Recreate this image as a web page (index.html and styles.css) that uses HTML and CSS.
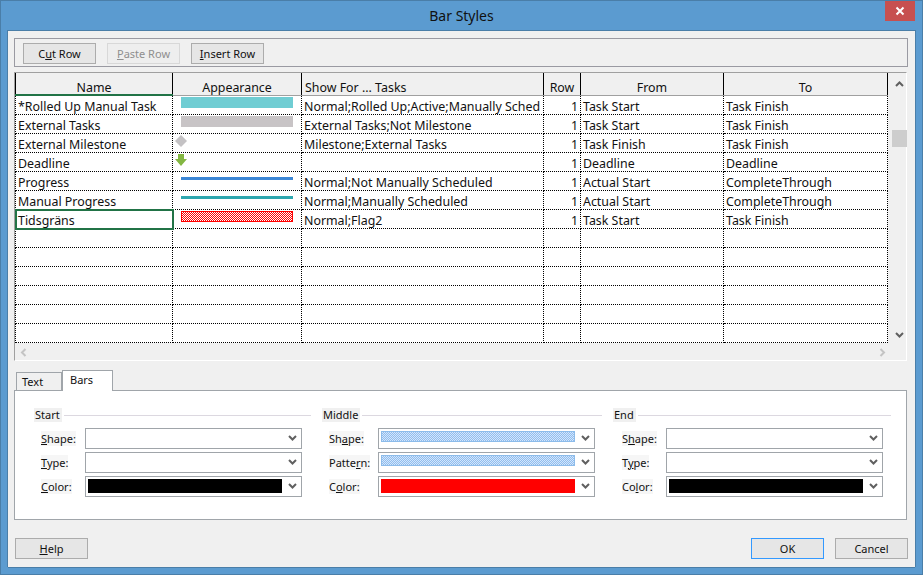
FILE: index.html
```html
<!DOCTYPE html>
<html lang="en">
<head>
<meta charset="UTF-8" />
<title>Bar Styles</title>
<link rel="stylesheet" href="styles.css">
</head>
<body>
<svg class="defs" width="0" height="0">
  <symbol id="chev" viewBox="0 0 9 6"><path d="M1 1l3.5 3.5L8 1" fill="none" stroke="currentColor" stroke-width="2"/></symbol>
</svg>

<div class="window">
  <div class="titlebar">Bar Styles
    <div class="close"><svg width="10" height="10" viewBox="0 0 10 10"><path d="M1.5 1.500l7 7M8.500 1.500l-7 7" stroke="#fff" stroke-width="2"/></svg></div>
  </div>

  <div class="dialog">
    <div class="toolbar">
      <button class="btn">C<u>u</u>t Row</button>
      <button class="btn disabled"><u>P</u>aste Row</button>
      <button class="btn"><u>I</u>nsert Row</button>
    </div>

    <div class="gridwrap">
      <div class="gridmain">
        <table class="grid">
          <colgroup>
            <col class="c1"><col class="c2"><col class="c3"><col class="c4"><col class="c5"><col class="c6">
          </colgroup>
          <thead>
            <tr><th class="active">Name</th><th>Appearance</th><th class="left">Show For ... Tasks</th><th>Row</th><th>From</th><th>To</th></tr>
          </thead>
          <tbody>
            <tr><td>*Rolled Up Manual Task</td><td class="app"><div class="bar teal"></div></td><td>Normal;Rolled Up;Active;Manually Sched</td><td class="num">1</td><td>Task Start</td><td>Task Finish</td></tr>
            <tr><td>External Tasks</td><td class="app"><div class="bar grey"></div></td><td>External Tasks;Not Milestone</td><td class="num">1</td><td>Task Start</td><td>Task Finish</td></tr>
            <tr><td>External Milestone</td><td class="app"><svg class="mark" width="12" height="12" viewBox="0 0 12 12"><path d="M6 0l6 6-6 6-6-6z" fill="#c4c2c4"/></svg></td><td>Milestone;External Tasks</td><td class="num">1</td><td>Task Finish</td><td>Task Finish</td></tr>
            <tr><td>Deadline</td><td class="app"><svg class="mark" width="12" height="12" viewBox="0 0 12 12"><path d="M3 0h6v5h3l-6 7-6-7h3z" fill="#84b743"/></svg></td><td></td><td class="num">1</td><td>Deadline</td><td>Deadline</td></tr>
            <tr><td>Progress</td><td class="app"><div class="line blue"></div></td><td>Normal;Not Manually Scheduled</td><td class="num">1</td><td>Actual Start</td><td>CompleteThrough</td></tr>
            <tr><td>Manual Progress</td><td class="app"><div class="line cyan"></div></td><td>Normal;Manually Scheduled</td><td class="num">1</td><td>Actual Start</td><td>CompleteThrough</td></tr>
            <tr><td class="selected">Tidsgräns</td><td class="app"><div class="bar hatch"></div></td><td>Normal;Flag2</td><td class="num">1</td><td>Task Start</td><td>Task Finish</td></tr>
            <tr><td></td><td></td><td></td><td></td><td></td><td></td></tr>
            <tr><td></td><td></td><td></td><td></td><td></td><td></td></tr>
            <tr><td></td><td></td><td></td><td></td><td></td><td></td></tr>
            <tr><td></td><td></td><td></td><td></td><td></td><td></td></tr>
            <tr><td></td><td></td><td></td><td></td><td></td><td></td></tr>
            <tr><td></td><td></td><td></td><td></td><td></td><td></td></tr>
          </tbody>
        </table>
        <div class="hscroll">
          <svg class="arrow left-arrow" width="9" height="9" viewBox="0 0 6 9"><path d="M5 1L1.500 4.500 5 8" fill="none" stroke="#c4c4c4" stroke-width="2"/></svg>
          <svg class="arrow" width="9" height="9" viewBox="0 0 6 9"><path d="M1 1l3.500 3.500L1 8" fill="none" stroke="#c4c4c4" stroke-width="2"/></svg>
        </div>
      </div>
      <div class="vscroll">
        <svg class="arrow" width="9" height="6" viewBox="0 0 9 6"><path d="M1 5l3.500-3.500L8 5" fill="none" stroke="#606060" stroke-width="2"/></svg>
        <div class="thumb"></div>
        <svg class="arrow down" width="9" height="6"><use href="#chev"/></svg>
      </div>
    </div>

    <div class="tabs">
      <div class="tab">Text</div>
      <div class="tab current">Bars</div>
    </div>
    <div class="panel">
      <section class="group start">
        <div class="legend"><span>Start</span></div>
        <div class="field"><label><span><u>S</u>hape:</span></label><div class="select"><div class="value"></div><svg class="caret" width="9" height="6"><use href="#chev"/></svg></div></div>
        <div class="field"><label><span><u>T</u>ype:</span></label><div class="select"><div class="value"></div><svg class="caret" width="9" height="6"><use href="#chev"/></svg></div></div>
        <div class="field"><label><span><u>C</u>olor:</span></label><div class="select"><div class="value black"></div><svg class="caret" width="9" height="6"><use href="#chev"/></svg></div></div>
      </section>
      <section class="group middle">
        <div class="legend"><span>Middle</span></div>
        <div class="field"><label><span>Sh<u>a</u>pe:</span></label><div class="select"><div class="value dots"></div><svg class="caret" width="9" height="6"><use href="#chev"/></svg></div></div>
        <div class="field"><label><span>Patte<u>r</u>n:</span></label><div class="select"><div class="value dots"></div><svg class="caret" width="9" height="6"><use href="#chev"/></svg></div></div>
        <div class="field"><label><span>C<u>o</u>lor:</span></label><div class="select"><div class="value red"></div><svg class="caret" width="9" height="6"><use href="#chev"/></svg></div></div>
      </section>
      <section class="group end">
        <div class="legend"><span>End</span></div>
        <div class="field"><label><span>S<u>h</u>ape:</span></label><div class="select"><div class="value"></div><svg class="caret" width="9" height="6"><use href="#chev"/></svg></div></div>
        <div class="field"><label><span>T<u>y</u>pe:</span></label><div class="select"><div class="value"></div><svg class="caret" width="9" height="6"><use href="#chev"/></svg></div></div>
        <div class="field"><label><span>Co<u>l</u>or:</span></label><div class="select"><div class="value black"></div><svg class="caret" width="9" height="6"><use href="#chev"/></svg></div></div>
      </section>
    </div>

    <div class="footer">
      <button class="btn"><u>H</u>elp</button>
      <div class="footer-right">
        <button class="btn default">OK</button>
        <button class="btn">Cancel</button>
      </div>
    </div>
  </div>
</div>
</body>
</html>
```

FILE: styles.css
```css
* {
  box-sizing: border-box;
}
html, body {
  margin: 0;
  height: 100%;
  overflow: hidden;
}
body {
  font-family: "Noto Sans", "Open Sans", sans-serif;
  font-size: 11px;
  color: #111;
  background-color: #5b9bd0;
}
.defs {
  position: absolute;
}
.window {
  width: 923px;
  height: 575px;
  padding: 0 8px 8px 8px;
  background-color: #5b9bd0;
  box-shadow: inset 0 0 0 1px #4a7ea8;
  display: flex;
  flex-direction: column;
}
.titlebar {
  height: 30px;
  flex: none;
  text-align: center;
  font-size: 14px;
  line-height: 31px;
  color: #111;
  position: relative;
}
.close {
  position: absolute;
  top: 1px;
  right: 0;
  width: 30px;
  height: 20px;
  background-color: #c75050;
  display: flex;
  align-items: center;
  justify-content: center;
}
.dialog {
  flex: 1;
  background-color: #f0f0f0;
  padding: 7px 7px 8px 6px;
  display: flex;
  flex-direction: column;
  border-top: 1px solid #4a7ea8;
  box-shadow: -1px 0 0 #4a7ea8, 1px 0 0 #4a7ea8, 0 1px 0 #4a7ea8;
}
.toolbar {
  height: 29px;
  width: 894px;
  border: 1px solid #9a9aa2;
  display: flex;
  gap: 11px;
  padding: 4px 0 0 8px;
  flex: none;
}
.btn {
  width: 73px;
  height: 21px;
  border: 1px solid #acacac;
  background-color: #e6e6e6;
  font-family: inherit;
  font-size: 11px;
  color: #111;
  padding: 0;
  line-height: 17px;
}
.btn.disabled {
  color: #8f8f8f;
  border-color: #d8d8d8;
  background-color: #eee;
}
.btn.default {
  border-color: #3399ff;
}
.gridwrap {
  margin-top: 5px;
  width: 893px;
  height: 289px;
  flex: none;
  display: flex;
  border-top: 1px solid #a0a0a0;
  border-left: 1px solid #a0a0a0;
  border-right: 1px solid #fff;
  border-bottom: 1px solid #fff;
}
.gridmain {
  width: 873px;
  flex: none;
}
.grid {
  border-collapse: collapse;
  table-layout: fixed;
  width: 872px;
  font-size: 12.4px;
  background-color: #fff;
}
.c1 { width: 157px; }
.c2 { width: 129px; }
.c3 { width: 242px; }
.c4 { width: 37px; }
.c5 { width: 143px; }
.c6 { width: 164px; }
.grid th {
  height: 22px;
  font-weight: normal;
  background-color: #f0f0f0;
  border-left: 1px solid #000;
  border-right: 1px solid #000;
  border-bottom: 1px solid #a0a0a0;
  padding: 9px 0 0 0;
  vertical-align: top;
  line-height: 12px;
}
.grid th.left {
  text-align: left;
  padding-left: 3px;
}
.grid th.active {
  border-bottom: 2px solid #217346;
}
.grid td {
  height: 19px;
  padding: 4px 2px 0 2px;
  border-right: 1px dotted #000;
  border-bottom: 1px dotted #000;
  border-left: 1px dotted #000;
  white-space: nowrap;
  overflow: hidden;
  line-height: 14px;
}
.grid td.app {
  padding: 0;
  vertical-align: top;
}
.grid td.num {
  text-align: right;
}
.grid td.selected {
  outline: 2px solid #217346;
  outline-offset: -1px;
}
.bar {
  width: 112px;
  height: 11px;
  margin: 1px 0 0 8px;
}
.teal { background-color: #70cdd3; }
.grey { background-color: #c8c4c6; }
.hatch {
  border: 1px solid #f00;
  background: repeating-conic-gradient(#f00 0 25%, #fff 0 50%) 0 0 / 2px 2px;
}
.line {
  width: 112px;
  height: 3px;
  margin: 5px 0 0 8px;
}
.blue { background-color: #3c87d6; }
.cyan { background-color: #2fa8b0; }
.mark {
  display: block;
  margin: 1px 0 0 2px;
}
.hscroll {
  height: 18px;
  display: flex;
  justify-content: space-between;
  align-items: center;
  padding: 0 1px 0 4px;
}
.arrow {
  display: block;
  flex: none;
}
.vscroll {
  flex: 1;
  color: #606060;
  padding-top: 8px;
}
.vscroll .arrow {
  margin-left: 7px;
}
.thumb {
  height: 17px;
  width: 15px;
  margin: 43px 0 0 4px;
  background-color: #cdcdcd;
}
.vscroll .down {
  margin-top: 185px;
}
.tabs {
  display: flex;
  align-items: flex-end;
  height: 20px;
  margin-top: 9px;
  padding-left: 2px;
  flex: none;
  position: relative;
  z-index: 1;
}
.tab {
  width: 46px;
  height: 18px;
  border: 1px solid #a0a5aa;
  border-bottom: none;
  background-color: #f0f0f0;
  padding-left: 5px;
  line-height: 18px;
}
.tab.current {
  width: 51px;
  height: 21px;
  margin-bottom: -1px;
  background-color: #fff;
  padding-left: 7px;
  line-height: 17px;
}
.panel {
  width: 893px;
  height: 130px;
  flex: none;
  background-color: #fff;
  border: 1px solid #a0a5aa;
  display: flex;
  padding: 16px 0 0 19px;
}
.group {
  flex: none;
}
.start { width: 288px; }
.middle { width: 291px; }
.end { width: 278px; }
.legend {
  height: 16px;
  display: flex;
  align-items: center;
  gap: 2px;
  margin-bottom: 5px;
}
.legend span {
  background-color: #f0f0f0;
  padding: 0 2px 0 1px;
  line-height: 14px;
}
.legend::after {
  content: "";
  flex: 1;
  height: 1px;
  background-color: #dcd8e0;
}
.start .legend { margin-right: 11px; }
.middle .legend { margin-right: 11px; }
.field {
  display: flex;
  height: 20px;
  margin-bottom: 4px;
  align-items: center;
}
.field label {
  flex: none;
}
.start label { width: 51px; padding-left: 7px; }
.middle label { width: 56px; padding-left: 7px; }
.end label { width: 53px; padding-left: 9px; }
.field label span {
  background-color: #f6f6f6;
}
.select {
  width: 217px;
  height: 21px;
  border: 1px solid #a0a5aa;
  display: flex;
  align-items: center;
  padding: 2px 4px 2px 2px;
  color: #606060;
}
.value {
  width: 194px;
  height: 100%;
}
.caret {
  margin-left: auto;
}
.black {
  background-color: #000;
  height: 14px;
}
.red {
  background-color: #f00;
  height: 14px;
}
.dots {
  height: 11px;
  margin-bottom: 4px;
  border: 1px solid #8dbcea;
  background: repeating-conic-gradient(#8fbdf0 0 25%, #d4e6fa 0 50%) 0 0 / 2px 2px;
}
.footer {
  display: flex;
  justify-content: space-between;
  margin-top: 18px;
  width: 894px;
  padding-left: 1px;
}
.footer-right {
  display: flex;
  gap: 11px;
}
```
